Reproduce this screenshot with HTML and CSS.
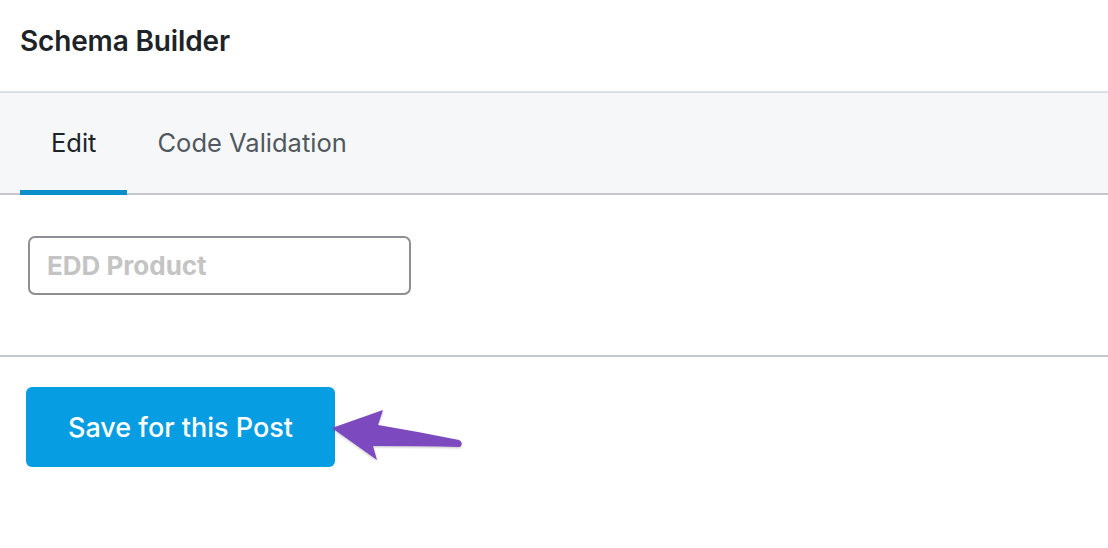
FILE: index.html
```html
<!DOCTYPE html>
<html>
<head>
<meta charset="utf-8">
<link rel="stylesheet" href="styles.css">
</head>
<body>
<div class="panel">
  <div class="header"><h1 class="title">Schema Builder</h1></div>
  <div class="tabs">
    <div class="tab active">Edit</div>
    <div class="tab">Code Validation</div>
  </div>
  <div class="content">
    <div class="field">EDD Product</div>
  </div>
  <div class="footer">
    <button class="save">Save for this Post</button>
    <svg class="arrow" width="160" height="80" viewBox="320 395 160 80">
      <defs>
        <filter id="sh" x="-20%" y="-20%" width="140%" height="140%">
          <feDropShadow dx="0" dy="1" stdDeviation="1" flood-color="#000" flood-opacity="0.25"/>
        </filter>
      </defs>
      <path filter="url(#sh)" fill="#7b4abf" d="M332,428 L383,410 L378,425 Q420,432 459,440 Q464,443 460,447 Q420,446 373,446 L377,460 Z"/>
    </svg>
  </div>
</div>
</body>
</html>
```
FILE: styles.css
```css
html, body {
  margin: 0;
  padding: 0;
  background: #fff;
}
body {
  font-family: Inter, "Noto Sans", "Liberation Sans", sans-serif;
  color: #1d2327;
}
.panel {
  width: 1108px;
  height: 548px;
  position: relative;
  overflow: hidden;
}
.header {
  height: 91px;
  border-bottom: 2px solid #dcdfe3;
  display: flex;
  align-items: center;
  padding-left: 20px;
  box-sizing: content-box;
}
.title {
  margin: 0;
  font-size: 28px;
  font-weight: 600;
  letter-spacing: -0.15px;
  color: #1d2327;
  position: relative;
  top: -5px;
}
.tabs {
  display: flex;
  background: #f6f7f8;
  height: 100px;
  border-bottom: 2px solid #c3c6cb;
  padding-left: 20px;
}
.tab {
  padding: 0 31px 0 31px;
  display: flex;
  align-items: center;
  font-size: 25.5px;
  color: #50575e;
  position: relative;
  box-sizing: border-box;
  padding-bottom: 2px;
}
.tab + .tab {
  padding-left: 30px;
}
.tab.active {
  color: #1d2327;
}
.tab.active::after {
  content: "";
  position: absolute;
  left: 0;
  right: 0;
  bottom: -2px;
  height: 5px;
  background: #0a8fc8;
}
.content {
  height: 162px;
  border-bottom: 2px solid #c3c6cb;
  padding: 41px 0 0 28px;
  box-sizing: border-box;
}
.field {
  width: 383px;
  height: 59px;
  box-sizing: border-box;
  border: 2px solid #8c8f94;
  border-radius: 7px;
  padding-left: 17px;
  display: flex;
  align-items: center;
  font-size: 26px;
  font-weight: 700;
  color: #c4c4c4;
}
.footer {
  padding: 30px 0 0 26px;
  position: relative;
}
.save {
  width: 309px;
  height: 80px;
  border: none;
  border-radius: 6px;
  background: #069de3;
  color: #fff;
  font-family: Inter, "Noto Sans", "Liberation Sans", sans-serif;
  font-size: 27px;
  font-weight: 500;
  padding: 0;
}
.arrow {
  position: absolute;
  left: 320px;
  top: 38px;
}
```
